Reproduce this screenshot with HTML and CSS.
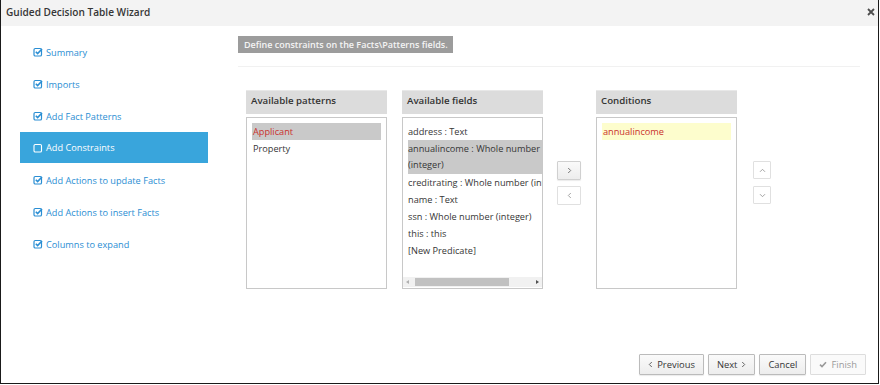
FILE: index.html
```html
<!DOCTYPE html>
<html lang="en">
<head>
  <meta charset="UTF-8" />
  <title>Guided Decision Table Wizard</title>
  <link rel="stylesheet" href="styles.css">
</head>
<body>

<div class="modal">
  <div class="modal-header">
    <span class="modal-title">Guided Decision Table Wizard</span>
    <svg class="close" width="8" height="8" viewBox="0 0 8 8"><path d="M1 1 L7 7 M7 1 L1 7" stroke="#4d4d4d" stroke-width="1.8"/></svg>
  </div>

  <div class="modal-body">
    <ul class="steps">
      <li class="step">
        <svg class="check" viewBox="0 0 10 10"><rect x="1" y="1.5" width="7.5" height="7.5" rx="1.3" fill="none" stroke="currentColor" stroke-width="1.2"/><path d="M2.8 4.8 L4.6 6.6 L9 2" fill="none" stroke="currentColor" stroke-width="1.6"/></svg>
        Summary
      </li>
      <li class="step">
        <svg class="check" viewBox="0 0 10 10"><rect x="1" y="1.5" width="7.5" height="7.5" rx="1.3" fill="none" stroke="currentColor" stroke-width="1.2"/><path d="M2.8 4.8 L4.6 6.6 L9 2" fill="none" stroke="currentColor" stroke-width="1.6"/></svg>
        Imports
      </li>
      <li class="step">
        <svg class="check" viewBox="0 0 10 10"><rect x="1" y="1.5" width="7.5" height="7.5" rx="1.3" fill="none" stroke="currentColor" stroke-width="1.2"/><path d="M2.8 4.8 L4.6 6.6 L9 2" fill="none" stroke="currentColor" stroke-width="1.6"/></svg>
        Add Fact Patterns
      </li>
      <li class="step active">
        <svg class="check" viewBox="0 0 10 10"><rect x="1" y="1.5" width="7.5" height="7.5" rx="1.3" fill="none" stroke="currentColor" stroke-width="1.1"/></svg>
        Add Constraints
      </li>
      <li class="step">
        <svg class="check" viewBox="0 0 10 10"><rect x="1" y="1.5" width="7.5" height="7.5" rx="1.3" fill="none" stroke="currentColor" stroke-width="1.2"/><path d="M2.8 4.8 L4.6 6.6 L9 2" fill="none" stroke="currentColor" stroke-width="1.6"/></svg>
        Add Actions to update Facts
      </li>
      <li class="step">
        <svg class="check" viewBox="0 0 10 10"><rect x="1" y="1.5" width="7.5" height="7.5" rx="1.3" fill="none" stroke="currentColor" stroke-width="1.2"/><path d="M2.8 4.8 L4.6 6.6 L9 2" fill="none" stroke="currentColor" stroke-width="1.6"/></svg>
        Add Actions to insert Facts
      </li>
      <li class="step">
        <svg class="check" viewBox="0 0 10 10"><rect x="1" y="1.5" width="7.5" height="7.5" rx="1.3" fill="none" stroke="currentColor" stroke-width="1.2"/><path d="M2.8 4.8 L4.6 6.6 L9 2" fill="none" stroke="currentColor" stroke-width="1.6"/></svg>
        Columns to expand
      </li>
    </ul>

    <div class="page">
      <div class="page-head">
        <span class="hint">Define constraints on the Facts\Patterns fields.</span>
      </div>

      <div class="lists">
        <div class="panel">
          <div class="panel-title">Available patterns</div>
          <div class="panel-box">
            <div class="row selected red">Applicant</div>
            <div class="row">Property</div>
          </div>
        </div>

        <div class="panel fields">
          <div class="panel-title">Available fields</div>
          <div class="panel-box">
            <div class="field-list">
              <div class="row">address : Text</div>
              <div class="row selected wrap">annualincome : Whole number (integer)</div>
              <div class="row">creditrating : Whole number (integer)</div>
              <div class="row">name : Text</div>
              <div class="row">ssn : Whole number (integer)</div>
              <div class="row">this : this</div>
              <div class="row">[New Predicate]</div>
            </div>
            <div class="hscroll">
              <span class="arrow left"></span>
              <span class="thumb"></span>
              <span class="arrow right"></span>
            </div>
          </div>
        </div>

        <div class="movers">
          <button class="btn small">
            <svg width="5" height="7" viewBox="0 0 5 7"><path d="M1.2 1 L3.7 3.5 L1.2 6" fill="none" stroke="#666" stroke-width="0.9"/></svg>
          </button>
          <button class="btn small light">
            <svg width="5" height="7" viewBox="0 0 5 7"><path d="M3.8 1 L1.3 3.5 L3.8 6" fill="none" stroke="#999" stroke-width="0.9"/></svg>
          </button>
        </div>

        <div class="panel">
          <div class="panel-title">Conditions</div>
          <div class="panel-box">
            <div class="row condition red">annualincome</div>
          </div>
        </div>

        <div class="movers updown">
          <button class="btn small light">
            <svg width="7" height="5" viewBox="0 0 7 5"><path d="M1 3.8 L3.5 1.3 L6 3.8" fill="none" stroke="#999" stroke-width="0.9"/></svg>
          </button>
          <button class="btn small light">
            <svg width="7" height="5" viewBox="0 0 7 5"><path d="M1 1.2 L3.5 3.7 L6 1.2" fill="none" stroke="#999" stroke-width="0.9"/></svg>
          </button>
        </div>
      </div>
    </div>
  </div>

  <div class="modal-footer">
    <button class="btn"><svg class="chev" width="5" height="7" viewBox="0 0 5 7"><path d="M3.8 1 L1.3 3.5 L3.8 6" fill="none" stroke="#555" stroke-width="0.9"/></svg> Previous</button>
    <button class="btn">Next <svg class="chev" width="5" height="7" viewBox="0 0 5 7"><path d="M1.2 1 L3.7 3.5 L1.2 6" fill="none" stroke="#555" stroke-width="0.9"/></svg></button>
    <button class="btn">Cancel</button>
    <button class="btn disabled"><svg class="tick" width="8" height="7" viewBox="0 0 8 7"><path d="M1 3.6 L3 5.6 L7 1.2" fill="none" stroke="#999" stroke-width="1.6"/></svg> Finish</button>
  </div>
</div>

</body>
</html>
```

FILE: styles.css
```css
body {
  margin: 0;
  font-family: "Open Sans", sans-serif;
  font-size: 9.2px;
  color: #363636;
  background: #fff;
}
.modal {
  width: 879px;
  height: 384px;
  box-sizing: border-box;
  border: 1px solid #1a1a1a;
  border-top: none;
  display: flex;
  flex-direction: column;
}
.modal-header {
  height: 24px;
  background: #f3f3f3;
  display: flex;
  align-items: center;
  justify-content: space-between;
  padding: 0 3px 2px 5px;
}
.modal-title {
  font-weight: 600;
  font-size: 10.1px;
  color: #363636;
}
.modal-body {
  flex: 1;
  display: flex;
}
.steps {
  list-style: none;
  margin: 0;
  padding: 10px 0 0 19px;
  width: 188px;
}
.step {
  height: 32px;
  display: flex;
  align-items: center;
  padding-left: 13px;
  color: #2a8ed3;
  font-size: 9.2px;
}
.step.active {
  background: #39a5dc;
  color: #fff;
  height: 31px;
  margin-bottom: 1px;
}
.check {
  width: 10px;
  height: 10px;
  margin-right: 3px;
}
.page {
  flex: 1;
  padding: 10px 18px 0 30px;
}
.page-head {
  padding-bottom: 13px;
  border-bottom: 1px solid #f1f1f1;
}
.hint {
  display: inline-block;
  background: #9c9c9c;
  color: #f4f4f4;
  font-weight: 600;
  font-size: 9px;
  padding: 3px 5px 2px 6px;
  line-height: 12px;
}
.lists {
  display: flex;
  align-items: flex-start;
  padding: 23px 0 0 8px;
}
.panel {
  width: 141px;
}
.panel-title {
  height: 24px;
  background: #dcdcdc;
  border-top: 1px solid #e8e8e8;
  box-sizing: border-box;
  font-weight: 600;
  font-size: 9.7px;
  color: #333;
  padding: 3px 5px 0;
}
.panel-box {
  margin-top: 3px;
  height: 172px;
  box-sizing: border-box;
  border: 1px solid #c8c8c8;
  padding: 5px 5px 0;
}
.fields {
  margin-left: 15px;
}
.fields .panel-box {
  padding: 0;
  display: flex;
  flex-direction: column;
}
.field-list {
  flex: 1;
  overflow: hidden;
  padding: 5px 0 0 5px;
}
.row {
  line-height: 17px;
  white-space: nowrap;
  padding-left: 1px;
}
.fields .row {
  padding-left: 0;
}
.row.wrap {
  white-space: normal;
  line-height: 16px;
  padding: 1px 0;
}
.row.selected {
  background: #c9c9c9;
}
.red {
  color: #c9302c;
}
.row.condition {
  background: #fdfdcd;
}
.hscroll {
  height: 10px;
  background: #f1f1f1;
  display: flex;
  align-items: center;
  margin-bottom: 1px;
  padding: 0 3px;
}
.thumb {
  height: 8px;
  width: 94px;
  background: #c1c1c1;
  margin-left: 6px;
}
.arrow {
  width: 0;
  height: 0;
  border-top: 2.5px solid transparent;
  border-bottom: 2.5px solid transparent;
}
.arrow.left {
  border-right: 3px solid #b0b0b0;
}
.arrow.right {
  border-left: 3px solid #505050;
  margin-left: auto;
}
.movers {
  display: flex;
  flex-direction: column;
  gap: 6px;
  margin: 71px 15px 0 14px;
}
.updown {
  margin-left: 16px;
}
.btn {
  font-family: "Open Sans", sans-serif;
  font-size: 9.4px;
  color: #363636;
  background: linear-gradient(#fafafa, #ededed);
  border: 1px solid #bbb;
  border-radius: 1px;
  height: 21px;
  padding: 0 8px;
  margin: 0;
  box-shadow: 0 1px 1px rgba(0,0,0,0.08);
  display: flex;
  align-items: center;
  gap: 4px;
  cursor: pointer;
}
.btn.small {
  width: 24px;
  height: 19px;
  padding: 0;
  border-color: #d0d0d0;
  justify-content: center;
}
.btn.small.light {
  background: #fff;
  border-color: #e0e0e0;
  box-shadow: none;
}
.updown .btn.small {
  width: 18px;
  height: 18px;
}
.updown {
  gap: 7px;
}
.btn.disabled {
  color: #9a9a9a;
  border-color: #ddd;
  background: #fafafa;
  box-shadow: none;
}
.modal-footer {
  display: flex;
  justify-content: flex-end;
  gap: 4px;
  padding: 0 12px 8px 0;
}
```
